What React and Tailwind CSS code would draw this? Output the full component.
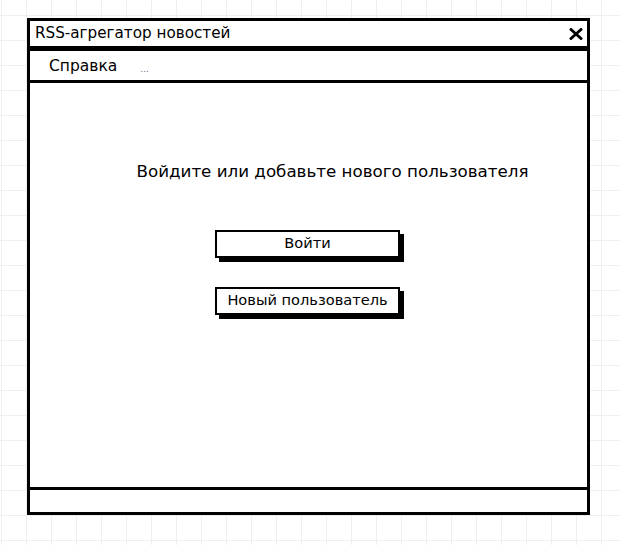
import React from "react";

function SketchButton({ label }) {
  return (
    <button className="w-[185px] h-[28px] border-2 border-black bg-white shadow-[4px_4px_0_#000] text-[14.6px] text-black flex items-center justify-center leading-none">
      {label}
    </button>
  );
}

export default function App() {
  return (
    <div className="w-[620px] h-[545px] overflow-hidden bg-white bg-[linear-gradient(to_right,#efefef_1px,transparent_1px),linear-gradient(to_bottom,#efefef_1px,transparent_1px)] bg-[size:25px_25px] bg-[position:1px_15px] pt-[18px] pl-[27px] font-['DejaVu_Sans','Noto_Sans',sans-serif] text-black">
      <div className="w-[563px] flex flex-col">
        <div className="h-[31px] border-[3px] border-black bg-white flex items-center justify-between pl-[5px] pr-[4px]">
          <span className="text-[15.2px] leading-none mt-[1px]">RSS-агрегатор новостей</span>
          <svg width="14" height="12" viewBox="0 0 14 12">
            <path d="M2 1.5 L12 10.5 M12 1.5 L2 10.5" stroke="#000" strokeWidth="3" strokeLinecap="round" />
          </svg>
        </div>
        <div className="h-[34px] border-[3px] border-t-2 border-black bg-white flex items-center pl-[19px] pt-[3px]">
          <span className="text-[15.5px] leading-none">Справка</span>
          <span className="ml-[23px] text-[9px] text-gray-500 leading-none mt-[4px]">...</span>
        </div>
        <div className="h-[404px] border-x-[3px] border-black bg-white flex flex-col items-center pt-[80px]">
          <p className="text-[16.7px] leading-none ml-[48px]">Войдите или добавьте нового пользователя</p>
          <div className="mt-[50px] flex flex-col gap-[29px] mr-[2px]">
            <SketchButton label="Войти" />
            <SketchButton label="Новый пользователь" />
          </div>
        </div>
        <div className="h-[28px] border-[3px] border-black bg-white" />
      </div>
    </div>
  );
}
